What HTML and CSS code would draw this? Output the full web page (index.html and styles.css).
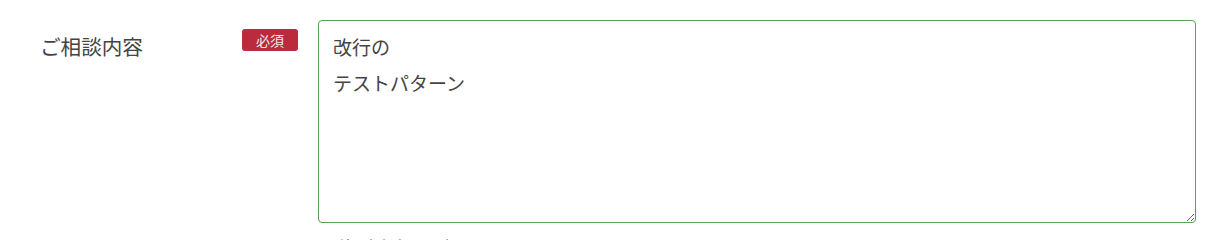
FILE: index.html
```html
<!DOCTYPE html>
<html lang="ja">
<head>
<meta charset="utf-8">
<title>ご相談内容</title>
<link rel="stylesheet" href="styles.css">
</head>
<body>
<div class="form-row">
  <div class="label">ご相談内容</div>
  <div class="badge-col"><span class="badge">必須</span></div>
  <div class="field">
    <textarea class="textarea">改行の
テストパターン</textarea>
    <p class="error">ご相談内容を入力してください。</p>
  </div>
</div>
</body>
</html>
```
FILE: styles.css
```css
html, body {
  margin: 0;
  padding: 0;
  background: #ffffff;
}
body {
  font-family: "Noto Sans CJK JP", "Noto Sans", sans-serif;
  color: #444444;
  overflow: hidden;
}
.form-row {
  display: flex;
  align-items: flex-start;
  padding: 20px 18px 0 40px;
}
.label {
  width: 202px;
  flex: none;
  font-size: 20.6px;
  line-height: 36px;
  margin-top: 8px;
  color: #444444;
}
.badge-col {
  width: 76px;
  flex: none;
  display: flex;
  padding-top: 9px;
}
.badge {
  display: flex;
  align-items: center;
  justify-content: center;
  width: 56px;
  height: 22px;
  border-radius: 3px;
  background: #b92b3d;
  color: #f8e8ea;
  font-size: 14px;
  line-height: 1;
}
.field {
  flex: 1;
  min-width: 0;
}
.textarea {
  display: block;
  box-sizing: border-box;
  width: 100%;
  height: 203px;
  margin: 0;
  padding: 8px 14px;
  border: 1px solid #589f58;
  border-radius: 4px;
  font-family: "Noto Sans CJK JP", "Noto Sans", sans-serif;
  font-size: 19px;
  line-height: 36px;
  color: #444444;
  background: #ffffff;
  outline: none;
}
.error {
  margin: 11px 0 0 10px;
  font-size: 16px;
  line-height: 24px;
  color: #c0394d;
}
```
